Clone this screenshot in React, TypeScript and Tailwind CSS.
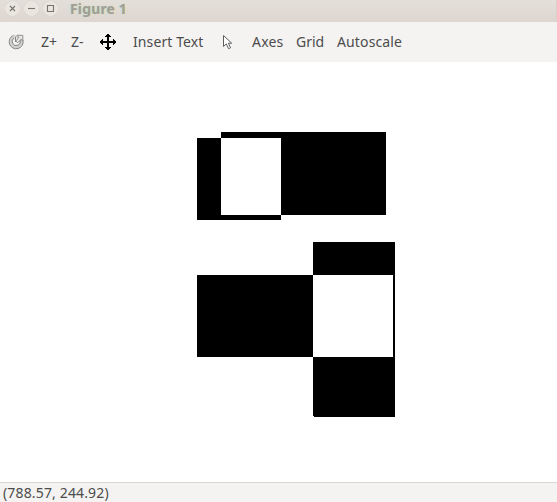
import type { ReactNode } from "react";

function WindowButton({ children }: { children: ReactNode }) {
  return (
    <button className="flex size-[15px] items-center justify-center rounded-full border border-[#eeebe6] bg-[#e9e5df] shadow-[0_0_1px_#c9c1b8]">
      <svg width="13" height="13" viewBox="0 0 13 13" fill="none" stroke="#77736d" strokeWidth="1.1" className="shrink-0">
        {children}
      </svg>
    </button>
  );
}

function TitleBar() {
  return (
    <header className="flex h-[22px] shrink-0 items-start border-r border-[#dccfc5] bg-linear-to-b from-[#e3dfd9] to-[#ded6d0] pt-px pl-[5px]">
      <div className="flex gap-1">
        <WindowButton>
          <path d="M4 4l5 5M9 4l-5 5" />
        </WindowButton>
        <WindowButton>
          <path d="M3 6.5h7" />
        </WindowButton>
        <WindowButton>
          <path d="M3.5 3.5h6v6h-6z" />
        </WindowButton>
      </div>
      <h1 className="ml-3 text-[14px] leading-[16px] font-bold tracking-[0.15px] whitespace-nowrap text-[#a39e94] [text-shadow:-1px_0_1px_#b5dcef,1px_0_1px_#f8dca5]">
        Figure 1
      </h1>
    </header>
  );
}

function ToolButton({ className, children }: { className: string; children: ReactNode }) {
  return <button className={`shrink-0 text-left whitespace-nowrap ${className}`}>{children}</button>;
}

function Toolbar() {
  return (
    <nav className="flex h-10 shrink-0 items-center bg-[#f4f3f2] pb-0.5 pl-2">
      <ToolButton className="w-[33px] pt-0.5">
        <svg width="18" height="18" viewBox="0 0 18 18" fill="none">
          <circle cx="8.3" cy="8.8" r="5.2" stroke="#d0d0ce" strokeWidth="3" />
          <path d="M5.5 2.3A7 7 0 1 0 15 7.2M5.8 5.2A4.1 4.1 0 1 0 12.2 7.2" stroke="#858585" strokeWidth="1" />
          <path d="M9 2.3h5.8v5.5l-1.9-1.5-3 3.4-2.1-1.5 3-3.9z" fill="#e8e8e6" stroke="#858585" strokeWidth=".9" />
          <path d="M7.5 4v5" stroke="#858585" strokeWidth="1" />
        </svg>
      </ToolButton>
      <ToolButton className="w-[30px]">Z+</ToolButton>
      <ToolButton className="w-[29px]">Z-</ToolButton>
      <ToolButton className="w-[33px] pt-0.5">
        <svg width="16" height="16" viewBox="0 0 16 16" shapeRendering="crispEdges">
          <path d="M7 0h2v1h1v1h1v1H9v4h4V5h1v1h1v1h1v2h-1v1h-1v1h-1V9H9v4h2v1h-1v1H9v1H7v-1H6v-1H5v-1h2V9H3v2H2v-1H1V9H0V7h1V6h1V5h1v2h4V3H5V2h1V1h1z" fill="#000" />
        </svg>
      </ToolButton>
      <ToolButton className="w-[89px] tracking-[0.1px]">Insert Text</ToolButton>
      <ToolButton className="w-[30px] pt-0.5">
        <svg width="12" height="17" viewBox="0 0 12 17">
          <path d="M1.5 1.5v11l2.8-2.6 2.3 4.8 2-1-2.3-4.5h3.4z" fill="#fff" stroke="#5e5e5e" />
        </svg>
      </ToolButton>
      <ToolButton className="w-[44px] tracking-[0.2px]">Axes</ToolButton>
      <ToolButton className="w-[41px] tracking-[-0.02px]">Grid</ToolButton>
      <ToolButton className="tracking-[0.13px]">Autoscale</ToolButton>
    </nav>
  );
}

function Plot() {
  return (
    <main className="h-[420px] shrink-0 bg-white">
      <svg width="557" height="420" viewBox="0 62 557 420" shapeRendering="crispEdges" className="block">
        <path fillRule="evenodd" d="M197 138h84v82h-84zM221 132h165v83H221z" />
        <path fillRule="evenodd" d="M197 275h196v82H197zM313 242h82v175h-81v-1h-1z" />
      </svg>
    </main>
  );
}

export default function App() {
  return (
    <div className="flex h-[502px] w-[557px] flex-col overflow-hidden bg-white font-['Noto_Sans','Open_Sans',sans-serif] text-[14px] text-[#4c4c4c]">
      <TitleBar />
      <Toolbar />
      <Plot />
      <footer className="flex h-5 shrink-0 items-center border-t border-[#d9d5d1] bg-[#f4f3f2] pl-[3px] leading-[19px]">
        <span className="tracking-[0.15px]">(788.57, 244.92)</span>
      </footer>
    </div>
  );
}
